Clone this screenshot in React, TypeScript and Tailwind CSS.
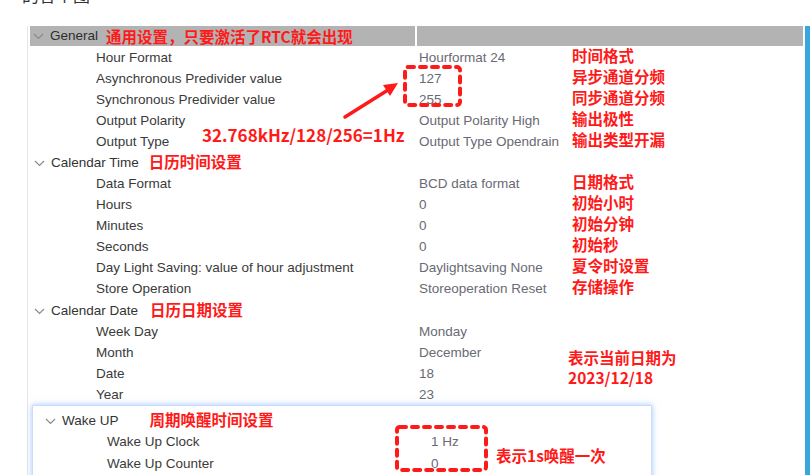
import React from "react";

const FONT = "font-['Liberation_Sans','Arial','Noto_Sans_CJK_SC',sans-serif]";
const CJK = "font-['Noto_Sans_CJK_SC','Liberation_Sans',sans-serif]";

function Chevron() {
  return (
    <svg width="11" height="7" viewBox="0 0 11 7" className="shrink-0">
      <polyline points="1,1 5.5,5.5 10,1" fill="none" stroke="#8a8a8a" strokeWidth="1.2" />
    </svg>
  );
}

function Note({ children, className = "" }: { children: React.ReactNode; className?: string }) {
  return (
    <span className={`${CJK} text-[15.5px] font-bold text-[#ff1a1a] leading-none whitespace-nowrap ${className}`}>
      {children}
    </span>
  );
}

type RowProps = { label: string; value: string; note?: string };

function Row({ label, value, note }: RowProps) {
  return (
    <div className="flex h-[21px] items-center pt-[4px]">
      <div className="w-[389px] pl-[66px] text-[13.5px] text-[#3a3a3a] whitespace-nowrap">{label}</div>
      <div className="w-[153px] text-[13.5px] text-[#6a6a74] whitespace-nowrap">{value}</div>
      {note ? <Note className="relative -top-[3px]">{note}</Note> : null}
    </div>
  );
}

function Header({ label, note, noteClass }: { label: string; note: string; noteClass: string }) {
  return (
    <div className="flex h-[21px] items-center pl-[4px] pt-[4px]">
      <Chevron />
      <span className="ml-[6px] text-[13.5px] text-[#333]">{label}</span>
      <Note className={`relative -top-[2px] ${noteClass}`}>{note}</Note>
    </div>
  );
}

export default function App() {
  return (
    <div className={`relative w-[810px] h-[475px] overflow-hidden bg-white ${FONT}`}>
      {/* cropped caption at top */}
      <div className="h-[26px] overflow-hidden">
        <div className={`${CJK} ml-[22px] -mt-[15px] text-[17px] text-[#333] leading-[20px]`}>的各个图</div>
      </div>

      <div className="flex">
        <div className="ml-[27px] w-[776px] border-l border-[#e6e6e6] h-[449px]">
          {/* General header */}
          <div className="flex h-[20px] bg-[#b3b3b3] ml-[2px]">
            <div className="flex w-[385px] items-center pl-[3px] pt-[1px]">
              <Chevron />
              <span className="ml-[6px] text-[13.5px] text-[#2e2e2e]">General</span>
              <Note className="ml-[8px]">通用设置，只要激活了RTC就会出现</Note>
            </div>
            <div className="w-[2px] bg-white" />
            <div className="flex-1" />
          </div>
          <div className="ml-[2px]">
            <Row label="Hour Format" value="Hourformat 24" note="时间格式" />
            <Row label="Asynchronous Predivider value" value="127" note="异步通道分频" />
            <Row label="Synchronous Predivider value" value="255" note="同步通道分频" />
            <Row label="Output Polarity" value="Output Polarity High" note="输出极性" />
            <Row label="Output Type" value="Output Type Opendrain" note="输出类型开漏" />
            <Header label="Calendar Time" note="日历时间设置" noteClass="ml-[10px]" />
            <Row label="Data Format" value="BCD data format" note="日期格式" />
            <Row label="Hours" value="0" note="初始小时" />
            <Row label="Minutes" value="0" note="初始分钟" />
            <Row label="Seconds" value="0" note="初始秒" />
            <Row label="Day Light Saving: value of hour adjustment" value="Daylightsaving None" note="夏令时设置" />
            <Row label="Store Operation" value="Storeoperation Reset" note="存储操作" />
            <div className="h-[1px]" />
            <Header label="Calendar Date" note="日历日期设置" noteClass="ml-[12px]" />
            <Row label="Week Day" value="Monday" />
            <Row label="Month" value="December" />
            <Row label="Date" value="18" />
            <Row label="Year" value="23" />
          </div>

          {/* Wake UP panel */}
          <div className="mt-[1px] ml-[4px] w-[620px] h-[80px] bg-white border-l border-t border-r border-[#c9dcff] shadow-[0_0_6px_rgba(90,150,255,0.55)] pt-[3px]">
            <div className="flex h-[21px] items-center pl-[12px] pt-[4px]">
              <Chevron />
              <span className="ml-[6px] text-[13.5px] text-[#333]">Wake UP</span>
              <Note className="relative -top-[2px] ml-[31px]">周期唤醒时间设置</Note>
            </div>
            <div className="flex h-[21px] items-center pt-[4px]">
              <div className="w-[398px] pl-[74px] text-[13.5px] text-[#3a3a3a]">Wake Up Clock</div>
              <div className="text-[13.5px] text-[#6a6a74]">1 Hz</div>
            </div>
            <div className="flex h-[21px] items-center pt-[5px]">
              <div className="w-[398px] pl-[74px] text-[13.5px] text-[#3a3a3a]">Wake Up Counter</div>
              <div className="text-[13.5px] text-[#6a6a74]">0</div>
            </div>
          </div>
        </div>
        <div className="w-[2px]" />
        <div className="w-[5px] h-[449px] bg-[#3ba6dc]" />
      </div>

      {/* Overlay annotations */}
      <div className={`absolute left-[202px] top-[125px] ${CJK} text-[17px] font-bold text-[#ff1a1a] leading-[20px] whitespace-nowrap`}>
        32.768kHz/128/256=1Hz
      </div>
      <div className={`absolute left-[568px] top-[347px] ${CJK} text-[15.5px] font-bold text-[#ff1a1a] leading-[20px]`}>
        <div>表示当前日期为</div>
        <div>2023/12/18</div>
      </div>
      <div className="absolute left-[496px] top-[445px]">
        <Note>表示1s唤醒一次</Note>
      </div>

      <svg className="absolute left-0 top-0 pointer-events-none" width="810" height="475">
        <rect x="405" y="67" width="55" height="38" rx="3" fill="none" stroke="#ff1a1a" strokeWidth="4" strokeDasharray="6 6" strokeLinecap="round" />
        <rect x="397" y="427" width="89" height="43" rx="3" fill="none" stroke="#ff1a1a" strokeWidth="4" strokeDasharray="6 6" strokeLinecap="round" />
        <line x1="345" y1="117" x2="388" y2="90" stroke="#ff1a1a" strokeWidth="3.5" strokeLinecap="round" />
        <polygon points="398,83 383,85 390,96" fill="#ff1a1a" />
      </svg>
    </div>
  );
}
